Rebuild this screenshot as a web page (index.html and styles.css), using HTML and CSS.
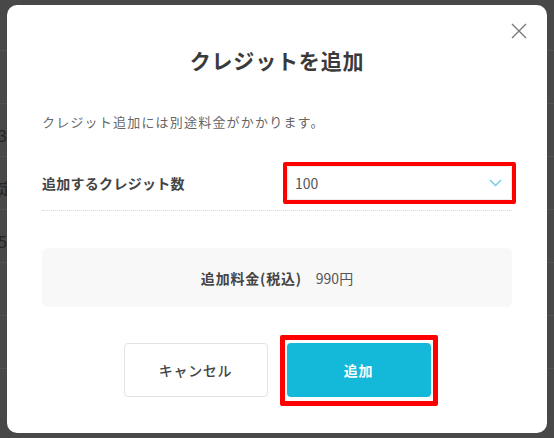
FILE: index.html
```html
<!DOCTYPE html>
<html lang="ja">
<head>
<meta charset="utf-8">
<title>クレジットを追加</title>
<link rel="stylesheet" href="styles.css">
</head>
<body>
<div class="backdrop">
  <div class="bg-row"></div>
  <div class="bg-row"><span class="bg-text">3</span></div>
  <div class="bg-row"><span class="bg-text">定</span></div>
  <div class="bg-row"><span class="bg-text">5</span></div>
  <div class="bg-row"></div>
  <div class="bg-row"></div>
  <div class="bg-row"></div>
</div>
<div class="modal">
  <button class="close" aria-label="閉じる">
    <svg width="16" height="16" viewBox="0 0 16 16"><path d="M1 1L15 15M15 1L1 15" stroke="#7a7a7a" stroke-width="1.4" fill="none"/></svg>
  </button>
  <h1 class="title">クレジットを追加</h1>
  <p class="desc">クレジット追加には別途料金がかかります。</p>
  <div class="field">
    <span class="label">追加するクレジット数</span>
    <div class="select highlight">
      <span class="select-value">100</span>
      <svg class="chevron" width="13" height="8" viewBox="0 0 13 8"><path d="M1 1L6.5 6.5L12 1" stroke="#6fcfe6" stroke-width="1.5" fill="none"/></svg>
    </div>
  </div>
  <div class="price">
    <span class="price-label">追加料金(税込)</span>
    <span class="price-value">990円</span>
  </div>
  <div class="actions">
    <button class="btn btn-cancel">キャンセル</button>
    <button class="btn btn-add highlight-btn">追加</button>
  </div>
</div>
</body>
</html>
```
FILE: styles.css
```css
* { box-sizing: border-box; }
html, body {
  margin: 0;
  height: 100%;
}
body {
  background: #484848;
  font-family: "Noto Sans CJK JP", "Noto Sans", sans-serif;
  overflow: hidden;
  position: relative;
}
.backdrop {
  padding-top: 50px;
}
.bg-row {
  height: 53px;
  border-top: 1px solid #525252;
  display: flex;
  align-items: center;
  padding-top: 10px;
}
.bg-text {
  font-size: 16px;
  color: #262626;
  margin-left: -2px;
}
.modal {
  position: absolute;
  left: 7px;
  top: 5px;
  width: 540px;
  height: 428px;
  background: #fff;
  border-radius: 10px;
  padding: 40px 35px 0 35px;
  letter-spacing: 0.05em;
}
.close {
  position: absolute;
  top: 16px;
  right: 18px;
  width: 20px;
  height: 20px;
  padding: 2px;
  border: 0;
  background: none;
  display: flex;
}
.title {
  margin: 0;
  text-align: center;
  font-size: 21px;
  line-height: 30px;
  font-weight: 700;
  color: #3a3a3a;
  letter-spacing: 0.04em;
}
.desc {
  margin: 37px 0 0;
  font-size: 13px;
  line-height: 20px;
  color: #666;
  letter-spacing: 1.2px;
}
.field {
  margin-top: 26px;
  padding: 8px 0 10px;
  border-bottom: 1px dotted #d6d6d6;
  display: flex;
  align-items: center;
  justify-content: space-between;
}
.label {
  font-size: 14px;
  font-weight: 700;
  color: #444;
  letter-spacing: 0.02em;
}
.select {
  position: relative;
  width: 225px;
  height: 34px;
  border: 1px solid #ececec;
  border-radius: 3px;
  display: flex;
  align-items: center;
  justify-content: space-between;
  padding: 0 9px 0 7px;
}
.select-value {
  font-size: 14px;
  color: #555;
  letter-spacing: 0;
}
.highlight::after {
  content: "";
  position: absolute;
  left: -5px;
  top: -5px;
  right: -5px;
  bottom: -5px;
  border: 4px solid #ff0000;
  border-radius: 2px;
  pointer-events: none;
}
.price {
  margin-top: 37px;
  height: 59px;
  background: #f8f8f8;
  border-radius: 6px;
  display: flex;
  align-items: center;
  justify-content: center;
  gap: 14px;
  font-size: 14px;
}
.price-label {
  font-weight: 700;
  color: #444;
}
.price-value {
  color: #555;
  letter-spacing: 0;
}
.actions {
  margin-top: 36px;
  display: flex;
  justify-content: center;
  gap: 19px;
}
.btn {
  width: 144px;
  height: 54px;
  font-family: inherit;
  font-size: 14px;
  letter-spacing: 0.05em;
  border-radius: 4px;
  cursor: pointer;
}
.btn-cancel {
  background: #fff;
  border: 1px solid #e3e3e3;
  color: #444;
  font-weight: 500;
}
.btn-add {
  position: relative;
  background: #14b8d8;
  border: 0;
  color: #fff;
  font-weight: 700;
}
.highlight-btn::after {
  content: "";
  position: absolute;
  left: -7px;
  top: -8px;
  right: -7px;
  bottom: -9px;
  border: 5px solid #ff0000;
  border-radius: 2px;
  pointer-events: none;
}
```
